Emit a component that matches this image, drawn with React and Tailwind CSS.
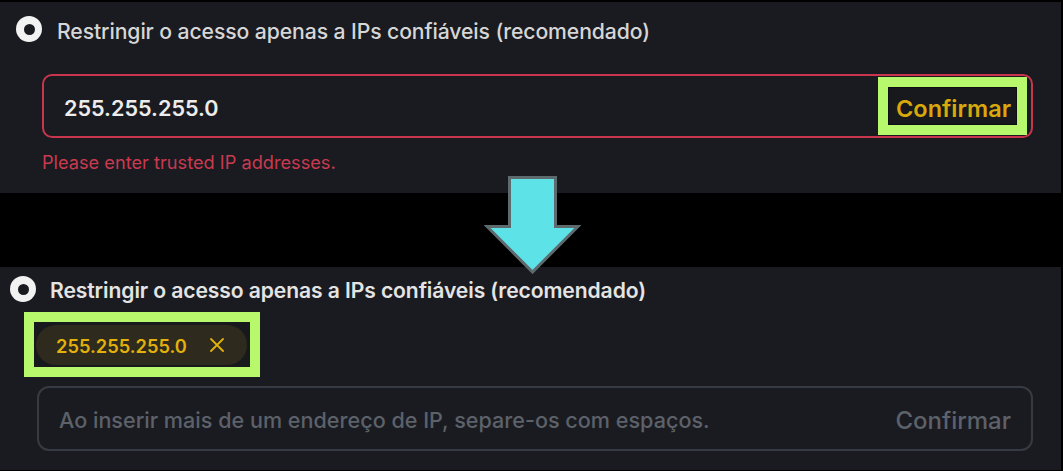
import React from "react";

const font = { fontFamily: "Inter, 'Noto Sans', sans-serif" };

function Radio() {
  return (
    <div className="w-[26px] h-[26px] rounded-full bg-[#f2f2f2] flex items-center justify-center shrink-0">
      <div className="w-[11px] h-[11px] rounded-full bg-[#1a1b20]" />
    </div>
  );
}

function Arrow() {
  return (
    <svg
      className="absolute left-[484px] top-[176px]"
      width="97"
      height="98"
      viewBox="0 0 97 98"
    >
      <polygon
        points="25.5,1.5 71.5,1.5 71.5,50.5 94,50.5 48.5,96 3,50.5 25.5,50.5"
        fill="#5de2e7"
        stroke="#5d6a6e"
        strokeWidth="3"
        strokeLinejoin="miter"
      />
    </svg>
  );
}

export default function App() {
  return (
    <div
      className="relative w-[1063px] h-[471px] bg-black overflow-hidden flex flex-col"
      style={font}
    >
      {/* Top panel */}
      <div className="mt-[2px] h-[191px] w-[1061px] bg-[#1a1b20] flex flex-col">
        <div className="mt-[14px] ml-[16px] h-[26px] flex items-center gap-[15px]">
          <Radio />
          <span className="pt-[5px] text-[21.2px] leading-none text-[#d6d6d6] font-medium tracking-[-0.1px]">
            Restringir o acesso apenas a IPs confiáveis (recomendado)
          </span>
        </div>
        <div className="mt-[32px] ml-[42px] w-[991px] h-[64px] border-2 border-[#c8354c] rounded-[10px] flex items-center justify-between pl-[20px] pr-[4px]">
          <span className="pt-[5px] text-[21.6px] font-semibold text-[#ececec] leading-none">
            255.255.255.0
          </span>
          <div className="border-[10px] border-[#b7f86c] h-[58px] w-[149px]">
            <div className="w-full h-full border border-[#0e0f12] bg-[#18191d] flex items-center justify-center pl-[2px]">
              <span className="pt-[5px] text-[23.5px] font-semibold text-[#d9a90b] leading-none">
                Confirmar
              </span>
            </div>
          </div>
        </div>
        <div className="mt-[14px] ml-[42px] h-[20px] flex items-center text-[18.2px] text-[#c93a50] leading-none">
          Please enter trusted IP addresses.
        </div>
      </div>

      {/* Bottom panel */}
      <div className="mt-[74px] h-[203px] w-[1061px] bg-[#1a1b20] flex flex-col">
        <div className="mt-[9px] ml-[10px] h-[26px] flex items-center gap-[14px]">
          <Radio />
          <span className="pt-[4px] text-[21.1px] leading-none text-[#e4e4e4] font-semibold tracking-[-0.1px]">
            Restringir o acesso apenas a IPs confiáveis (recomendado)
          </span>
        </div>
        <div className="mt-[10px] ml-[24px] w-[236px] h-[65px] border-[10px] border-[#b7f86c]">
          <div className="w-full h-full bg-[#18191d] flex items-start pt-[3px] px-[2px]">
            <div className="h-[40px] w-[211px] rounded-full bg-[#2e2a1d] flex items-center pl-[20px] gap-[23px]">
              <span className="pt-[3px] text-[18.3px] font-semibold text-[#e2b10c] leading-none">
                255.255.255.0
              </span>
              <svg width="14" height="14" viewBox="0 0 14 14">
                <path
                  d="M1 1 L13 13 M13 1 L1 13"
                  stroke="#e2b10c"
                  strokeWidth="1.8"
                  strokeLinecap="round"
                />
              </svg>
            </div>
          </div>
        </div>
        <div className="mt-[9px] ml-[37px] w-[996px] h-[65px] border-2 border-[#363a42] rounded-[12px] flex items-center justify-between pl-[20px] pr-[20px]">
          <span className="pt-[5px] text-[21.6px] text-[#5c616a] font-medium leading-none">
            Ao inserir mais de um endereço de IP, separe-os com espaços.
          </span>
          <span className="pt-[5px] text-[24px] text-[#5c616a] font-medium leading-none">
            Confirmar
          </span>
        </div>
      </div>

      <Arrow />
    </div>
  );
}
